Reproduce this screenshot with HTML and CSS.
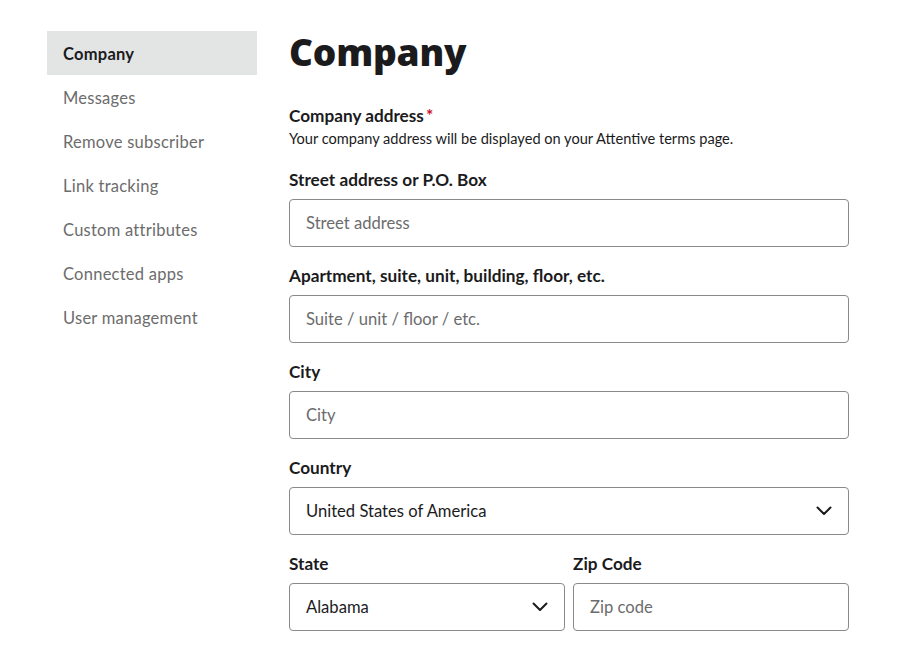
FILE: index.html
```html
<!DOCTYPE html>
<html lang="en">
<head>
<meta charset="utf-8">
<title>Company</title>
<link rel="stylesheet" href="styles.css">
</head>
<body>
<div class="page">
  <nav class="sidebar">
    <a class="nav-item active">Company</a>
    <a class="nav-item">Messages</a>
    <a class="nav-item">Remove subscriber</a>
    <a class="nav-item">Link tracking</a>
    <a class="nav-item">Custom attributes</a>
    <a class="nav-item">Connected apps</a>
    <a class="nav-item">User management</a>
  </nav>
  <main class="content">
    <h1 class="title">Company</h1>
    <div class="section-head">
      <div class="section-title">Company address<span class="req">*</span></div>
      <div class="section-desc">Your company address will be displayed on your Attentive terms page.</div>
    </div>
    <div class="field">
      <label class="label">Street address or P.O. Box</label>
      <div class="input placeholder">Street address</div>
    </div>
    <div class="field">
      <label class="label">Apartment, suite, unit, building, floor, etc.</label>
      <div class="input placeholder">Suite / unit / floor / etc.</div>
    </div>
    <div class="field">
      <label class="label">City</label>
      <div class="input placeholder">City</div>
    </div>
    <div class="field">
      <label class="label">Country</label>
      <div class="input select"><span>United States of America</span>
        <svg class="chev" width="16" height="10" viewBox="0 0 16 10"><path d="M1.5 1.5 L8 8 L14.5 1.5" fill="none" stroke="#1b1b1d" stroke-width="2" stroke-linecap="round" stroke-linejoin="round"/></svg>
      </div>
    </div>
    <div class="row">
      <div class="field">
        <label class="label">State</label>
        <div class="input select"><span>Alabama</span>
          <svg class="chev" width="16" height="10" viewBox="0 0 16 10"><path d="M1.5 1.5 L8 8 L14.5 1.5" fill="none" stroke="#1b1b1d" stroke-width="2" stroke-linecap="round" stroke-linejoin="round"/></svg>
        </div>
      </div>
      <div class="field">
        <label class="label">Zip Code</label>
        <div class="input placeholder">Zip code</div>
      </div>
    </div>
  </main>
</div>
</body>
</html>
```

FILE: styles.css
```css
* { box-sizing: border-box; }
html, body { margin: 0; padding: 0; background: #fff; }
body {
  font-family: Lato, "Noto Sans", sans-serif;
  color: #1b1b1d;
  font-size: 16px;
}
.page {
  display: flex;
  gap: 32px;
  padding: 31px 51px 0 47px;
}
.sidebar {
  width: 210px;
  flex: none;
  display: flex;
  flex-direction: column;
}
.nav-item {
  display: block;
  height: 44px;
  padding-top: 2px;
  line-height: 42px;
  padding-left: 16px;
  font-size: 16.5px;
  color: #6c6c6c;
  letter-spacing: 0.25px;
}
.nav-item.active {
  background: #e3e4e4;
  color: #1b1b1d;
  font-weight: 700;
}
.content {
  flex: 1;
  display: flex;
  flex-direction: column;
}
.title {
  margin: 0;
  font-family: "Open Sans", sans-serif;
  font-weight: 800;
  font-size: 37px;
  line-height: 40px;
  padding-top: 1px;
  height: 72px;
  letter-spacing: -0.2px;
}
.section-head { margin-bottom: 16px; }
.section-title {
  font-weight: 700;
  font-size: 17.2px;
  line-height: 24px;
  height: 24px;
  padding-top: 1px;
}
.req { color: #c8102e; margin-left: 2px; }
.section-desc {
  font-size: 14.6px;
  line-height: 24px;
}
.field {
  display: flex;
  flex-direction: column;
  gap: 8px;
  margin-bottom: 16px;
}
.label {
  font-weight: 700;
  font-size: 17.2px;
  line-height: 24px;
  height: 24px;
  padding-top: 1px;
}
.input {
  height: 48px;
  border: 1px solid #8a8a8a;
  border-radius: 4px;
  padding: 0 16px;
  display: flex;
  align-items: center;
  justify-content: space-between;
  font-size: 16.6px;
}
.placeholder { color: #6c6c6c; }
.row {
  display: grid;
  grid-template-columns: 1fr 1fr;
  gap: 8px;
}
```
